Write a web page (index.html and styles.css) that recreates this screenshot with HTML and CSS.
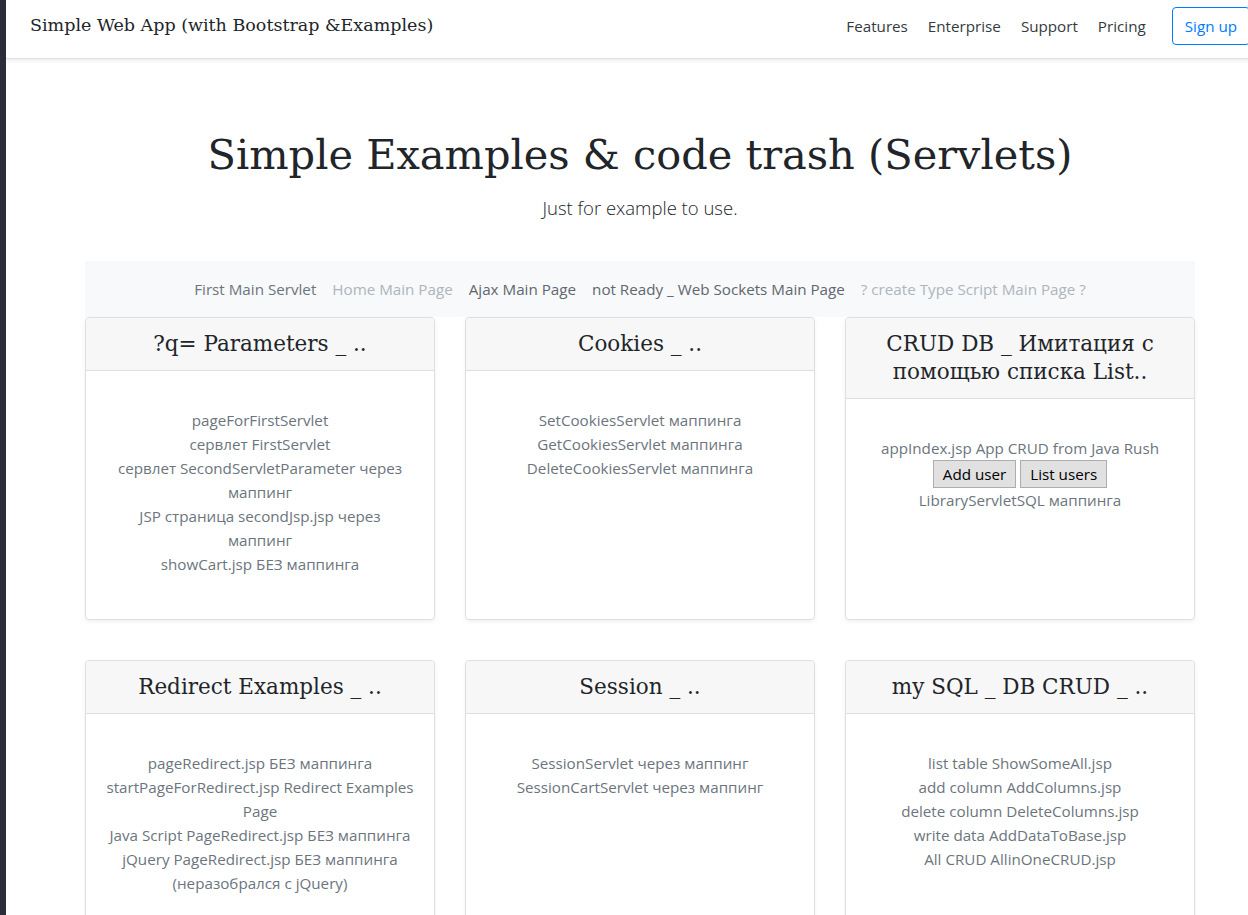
FILE: index.html
```html
<!DOCTYPE html>
<html lang="ru">
<head>
<meta charset="utf-8">
<title>Simple Web App</title>
<link rel="stylesheet" href="styles.css">
</head>
<body>
<div class="strip"></div>
<div class="page">
  <header class="topbar">
    <h5 class="brand">Simple Web App (with Bootstrap &amp;Examples)</h5>
    <nav class="topnav">
      <a href="#">Features</a>
      <a href="#">Enterprise</a>
      <a href="#">Support</a>
      <a href="#">Pricing</a>
    </nav>
    <a class="btn-signup" href="#">Sign up</a>
  </header>

  <section class="hero">
    <h1 class="display">Simple Examples &amp; code trash (Servlets)</h1>
    <p class="lead">Just for example to use.</p>
  </section>

  <div class="container">
    <nav class="subnav">
      <a href="#" class="muted">First Main Servlet</a>
      <a href="#" class="light">Home Main Page</a>
      <a href="#" class="dark">Ajax Main Page</a>
      <a href="#" class="dark">not Ready _ Web Sockets Main Page</a>
      <a href="#" class="light">? create Type Script Main Page ?</a>
    </nav>

    <div class="deck">
      <div class="card">
        <div class="card-header"><h4>?q= Parameters _ ..</h4></div>
        <div class="card-body">
          <ul>
            <li>pageForFirstServlet</li>
            <li>сервлет FirstServlet</li>
            <li>сервлет SecondServletParameter через маппинг</li>
            <li>JSP страница secondJsp.jsp через маппинг</li>
            <li>showCart.jsp БЕЗ маппинга</li>
          </ul>
        </div>
      </div>
      <div class="card">
        <div class="card-header"><h4>Cookies _ ..</h4></div>
        <div class="card-body">
          <ul>
            <li>SetCookiesServlet маппинга</li>
            <li>GetCookiesServlet маппинга</li>
            <li>DeleteCookiesServlet маппинга</li>
          </ul>
        </div>
      </div>
      <div class="card">
        <div class="card-header"><h4>CRUD DB _ Имитация с помощью списка List..</h4></div>
        <div class="card-body">
          <ul>
            <li>appIndex.jsp App CRUD from Java Rush</li>
            <li class="btn-row"><button class="sysbtn">Add user</button><button class="sysbtn">List users</button></li>
            <li>LibraryServletSQL маппинга</li>
          </ul>
        </div>
      </div>
    </div>

    <div class="deck">
      <div class="card">
        <div class="card-header"><h4>Redirect Examples _ ..</h4></div>
        <div class="card-body">
          <ul>
            <li>pageRedirect.jsp БЕЗ маппинга</li>
            <li>startPageForRedirect.jsp Redirect Examples Page</li>
            <li>Java Script PageRedirect.jsp БЕЗ маппинга</li>
            <li>jQuery PageRedirect.jsp БЕЗ маппинга (неразобрался с jQuery)</li>
          </ul>
        </div>
      </div>
      <div class="card">
        <div class="card-header"><h4>Session _ ..</h4></div>
        <div class="card-body">
          <ul>
            <li>SessionServlet через маппинг</li>
            <li>SessionCartServlet через маппинг</li>
          </ul>
        </div>
      </div>
      <div class="card">
        <div class="card-header"><h4>my SQL _ DB CRUD _ ..</h4></div>
        <div class="card-body">
          <ul>
            <li>list table ShowSomeAll.jsp</li>
            <li>add column AddColumns.jsp</li>
            <li>delete column DeleteColumns.jsp</li>
            <li>write data AddDataToBase.jsp</li>
            <li>All CRUD AllinOneCRUD.jsp</li>
          </ul>
        </div>
      </div>
    </div>
  </div>
</div>
</body>
</html>
```
FILE: styles.css
```css
html, body {
  margin: 0;
  padding: 0;
}
body {
  display: flex;
  overflow: hidden;
  height: 915px;
  background: #fff;
  font-family: "Open Sans", "Noto Sans", sans-serif;
  font-size: 15.2px;
  line-height: 24px;
  color: #212529;
}
.strip {
  flex: none;
  width: 6px;
  background: #2b2e38;
}
.page {
  flex: none;
  width: 1268px;
}
a { text-decoration: none; }

.topbar {
  display: flex;
  align-items: center;
  height: 59px;
  padding: 0 24px;
  box-sizing: border-box;
  border-bottom: 1px solid #dee2e6;
  box-shadow: 0 2px 4px rgba(0,0,0,.075);
  background: #fff;
}
.brand {
  margin: 0 auto 0 0;
  font-family: "DejaVu Serif", Georgia, serif;
  font-weight: normal;
  font-size: 17.5px;
  color: #212529;
  padding-bottom: 8px;
}
.topnav {
  display: flex;
  margin-right: 16px;
  padding-bottom: 6px;
}
.topnav a {
  padding: 0 10px;
  color: #343a40;
}
.btn-signup {
  display: block;
  color: #007bff;
  border: 1px solid #007bff;
  border-radius: 4px;
  padding: 6px 12px;
  line-height: 24px;
  margin-bottom: 6px;
}

.hero {
  text-align: center;
  padding-top: 66px;
  padding-bottom: 39px;
}
.display {
  margin: 0;
  font-family: "DejaVu Serif", Georgia, serif;
  font-weight: normal;
  font-size: 41.5px;
  line-height: 60px;
  color: #212529;
}
.lead {
  margin: 9px 0 0;
  font-size: 18.5px;
  line-height: 28px;
  font-weight: 300;
  color: #212529;
}

.container {
  width: 1110px;
  margin: 0 auto;
}
.subnav {
  display: flex;
  justify-content: center;
  height: 56px;
  align-items: center;
  background: #f8f9fa;
}
.subnav a { padding: 0 8px; }
.subnav .muted { color: #6c757d; }
.subnav .light { color: #adb5bd; }
.subnav .dark { color: #60676e; }

.deck {
  display: flex;
  gap: 30px;
  margin-bottom: 40px;
}
.card {
  flex: 1;
  display: flex;
  flex-direction: column;
  border: 1px solid #dfdfdf;
  border-radius: 4px;
  background: #fff;
  box-shadow: 0 2px 4px rgba(0,0,0,.06);
  text-align: center;
}
.card-header {
  background: #f7f7f7;
  border-bottom: 1px solid #dfdfdf;
  padding: 12px 20px;
  border-radius: 4px 4px 0 0;
}
.card-header h4 {
  margin: 0;
  font-family: "DejaVu Serif", Georgia, serif;
  font-weight: normal;
  font-size: 21.5px;
  line-height: 28px;
  color: #212529;
}
.card-body {
  flex: 1;
  padding: 20px;
}
.card-body ul {
  list-style: none;
  margin: 17px 0 23px;
  padding: 0;
  color: #6c757d;
}
.btn-row {
  display: flex;
  justify-content: center;
  gap: 4px;
  height: 28px;
}
.sysbtn {
  font-family: "Open Sans", "Noto Sans", sans-serif;
  font-size: 15.2px;
  line-height: 24px;
  height: 28px;
  box-sizing: border-box;
  color: #000;
  background: #e1e1e1;
  border: 1px solid #adadad;
  border-radius: 0;
  padding: 1px 9px;
  margin: 0;
}
```
